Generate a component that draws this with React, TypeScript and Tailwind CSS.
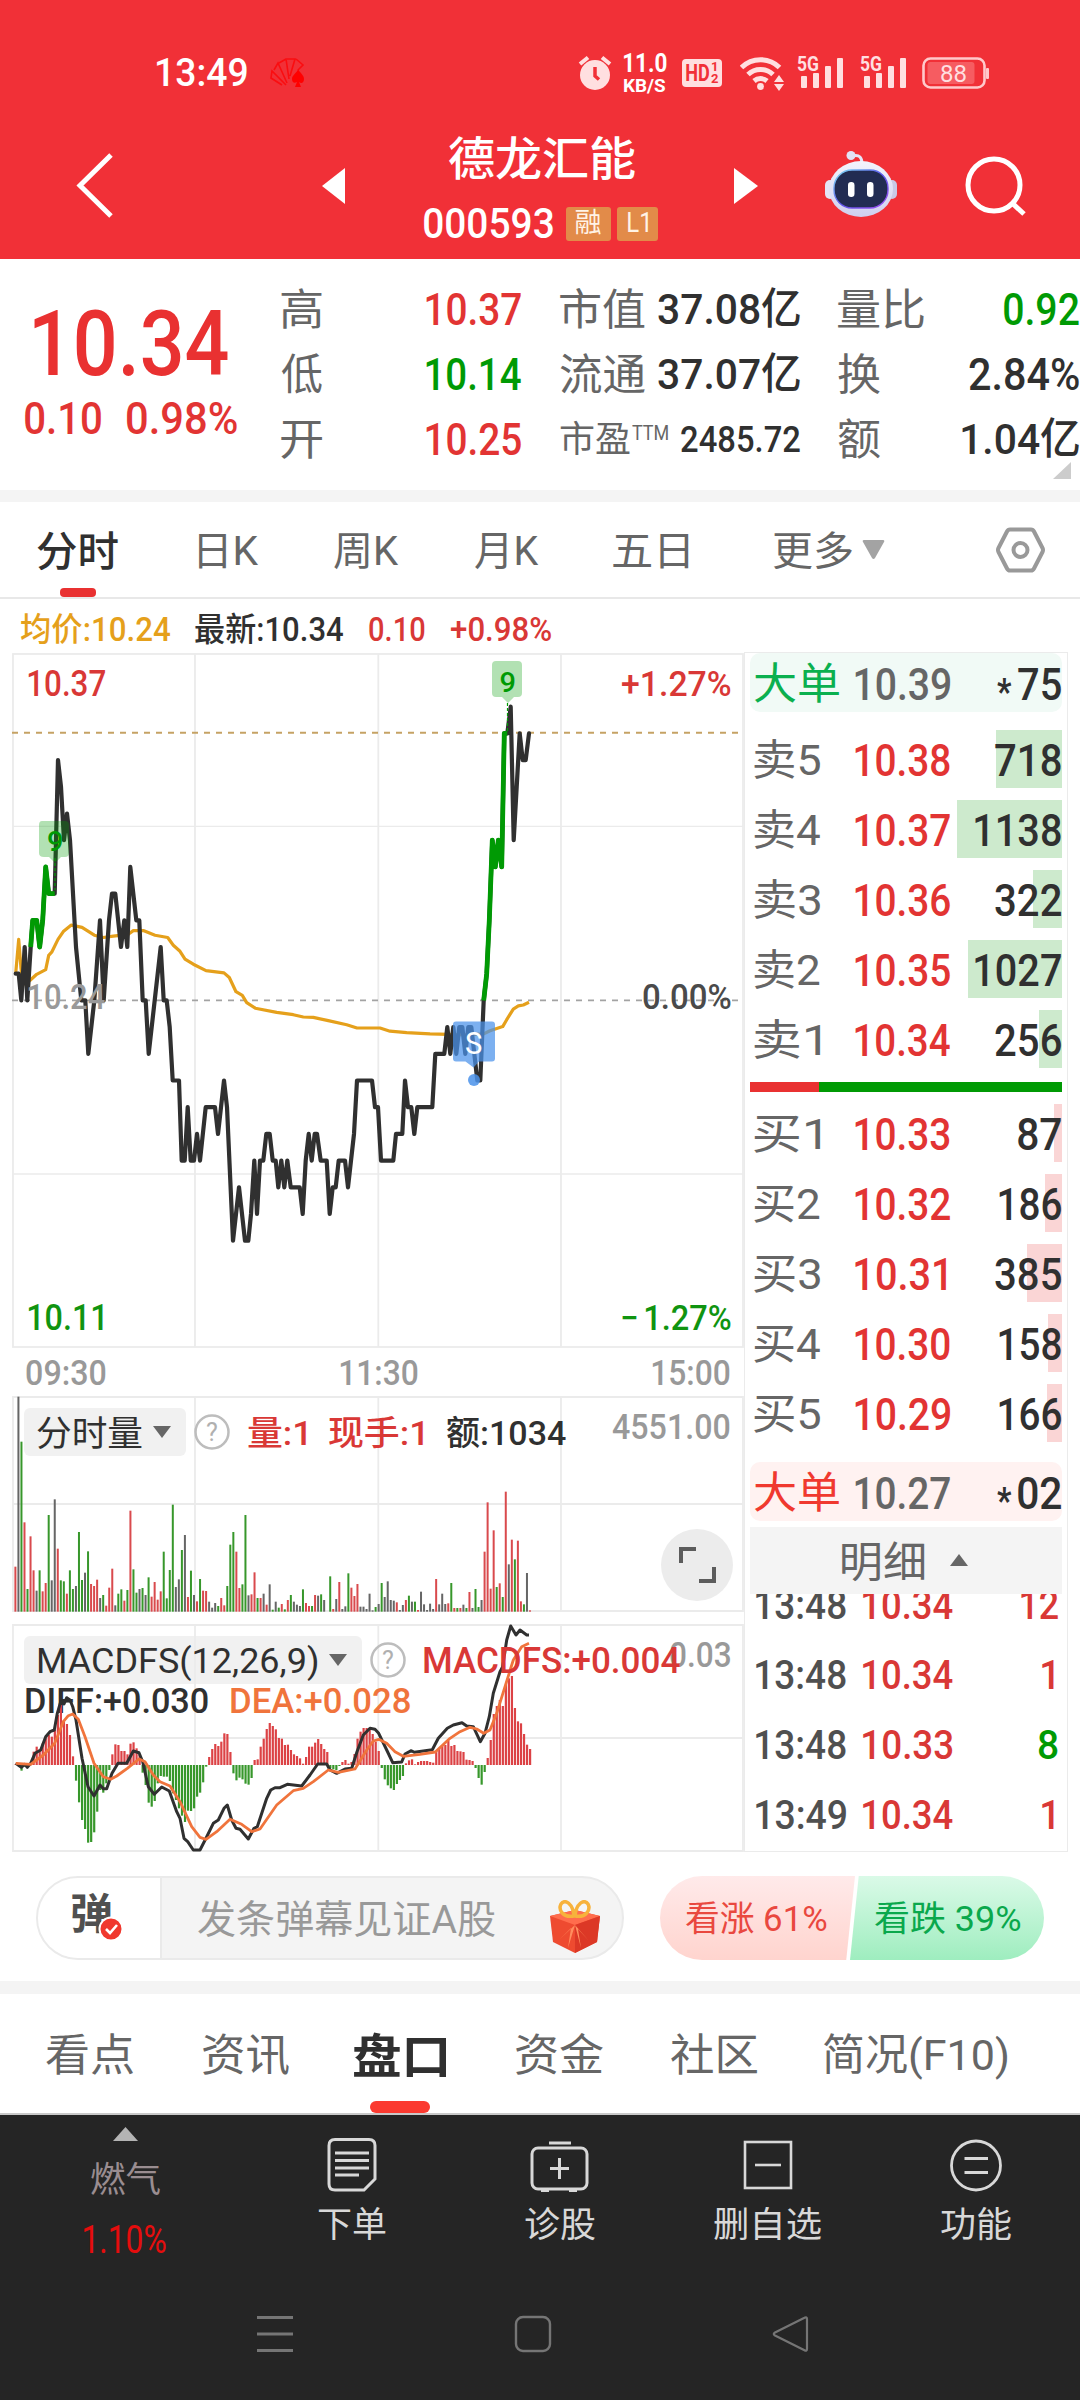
import React, { useMemo } from "react";

const FONT = 'Roboto, "Noto Sans CJK SC", sans-serif';

/* ---------- text that fills an exact width ---------- */

let canvas: HTMLCanvasElement | null = null;

function ink(text: string, size: number, weight: number) {
  canvas = canvas ?? document.createElement("canvas");
  const ctx = canvas.getContext("2d")!;
  ctx.font = `${weight} ${size}px ${FONT}`;
  const m = ctx.measureText(text);
  return { left: m.actualBoundingBoxLeft, width: m.actualBoundingBoxLeft + m.actualBoundingBoxRight };
}

type FitProps = { t: string; w: number; s: number; b?: number; className?: string };

function Fit({ t, w, s, b = 400, className = "" }: FitProps) {
  const m = useMemo(() => ink(t, s, b), [t, s, b]);
  const k = w / m.width;
  return (
    <span className={"block shrink-0 leading-none " + className} style={{ width: w, fontSize: s, fontWeight: b }}>
      <span
        className="inline-block origin-left whitespace-pre align-top"
        style={{ transform: `translateX(${m.left * k}px) scaleX(${k})` }}
      >
        {t}
      </span>
    </span>
  );
}

type ChartTextProps = { t: string; x: number; w: number; y: number; s: number; b?: number; fill: string; opacity?: number };

function ChartText({ t, x, w, y, s, b = 500, fill, opacity }: ChartTextProps) {
  const m = ink(t, s, b);
  const k = w / m.width;
  return (
    <text
      transform={`translate(${x + m.left * k} ${y}) scale(${k} 1)`}
      fontSize={s}
      fontWeight={b}
      fill={fill}
      opacity={opacity}
      fontFamily={FONT}
    >
      {t}
    </text>
  );
}

/* ---------- header ---------- */

function Signal() {
  return (
    <svg className="h-[34px] w-[48px]" viewBox="0 0 48 34">
      <text x="0" y="15" fontSize="20" fontWeight="700" fill="#ffdfe0" fontFamily={FONT} textLength="22" lengthAdjust="spacingAndGlyphs">5G</text>
      <g fill="#ffdfe0">
        <rect x="4" y="20" width="6" height="12" rx="1" />
        <rect x="16" y="17" width="6" height="15" rx="1" />
        <rect x="28" y="10" width="6" height="22" rx="1" />
        <rect x="40" y="2" width="6" height="30" rx="1" />
      </g>
    </svg>
  );
}

function StatusBar() {
  return (
    <div className="flex h-[146px] items-center pl-[157px]">
      <Fit t="13:49" w={90} s={38} b={500} className="text-white" />
      <svg className="ml-[23px] h-[30px] w-[36px]" viewBox="0 0 36 30">
        <g fill="none" stroke="#fa0d10" strokeWidth="1.600">
          <path d="M12 27L1 20l1-7 14 14M4 12l4-7 9 20M9 5l7-4 3 20M17 1h8l-5 17M26 1l7 6-5 5" />
        </g>
        <path d="M28 11c2 4 6 6 6 10 0 4-3 5-5 3l2 5h-6l2-5c-3 2-5 0-5-3 0-4 5-6 6-10z" fill="#ff0000" />
      </svg>
      <svg className="ml-[272px] h-[36px] w-[34px]" viewBox="0 0 34 36">
        <circle cx="17" cy="20" r="15" fill="#ffdfe0" />
        <path d="M2 9l8-6.500M32 9l-8-6.500" stroke="#ffdfe0" strokeWidth="4" />
        <path d="M17 12v9l4 3.500" stroke="#f13037" strokeWidth="3.500" fill="none" />
      </svg>
      <div className="ml-[12px] flex flex-col gap-0 text-white">
        <Fit t="11.0" w={43} s={25} b={700} />
        <Fit t="KB/S" w={42} s={19} b={700} />
      </div>
      <div className="ml-[15px] flex h-[28px] w-[40px] items-center gap-[2px] rounded-[4px] bg-[#ffdfe0] pl-[4px] text-[#f13037]">
        <Fit t="HD" w={23} s={23} b={700} />
        <span className="flex flex-col gap-0 text-[13px] leading-[12px] font-bold">
          <span>1</span>
          <span>2</span>
        </span>
      </div>
      <svg className="ml-[18px] h-[36px] w-[46px]" viewBox="0 0 46 36">
        <g fill="none" stroke="#ffdfe0" strokeWidth="5">
          <path d="M1.500 12.500a27 27 0 0 1 38 0" />
          <path d="M8 19.500a18 18 0 0 1 25 0" />
          <path d="M14 26a10 10 0 0 1 13 0" />
        </g>
        <circle cx="20.500" cy="31.500" r="3.400" fill="#ffdfe0" />
        <path d="M39 20l5 7H34zM39 36l5-7H34z" fill="#ffdfe0" />
      </svg>
      <div className="ml-[11px] flex gap-[15px]">
        <Signal />
        <Signal />
      </div>
      <svg className="ml-[14px] h-[32px] w-[68px]" viewBox="0 0 68 32">
        <rect x="1.500" y="1.500" width="61" height="29" rx="7" fill="none" stroke="#ffc9cb" strokeWidth="2.600" />
        <rect x="5.500" y="5" width="47" height="22" rx="3" fill="#f65c61" />
        <rect x="64" y="11" width="3" height="11" rx="1" fill="#ffc9cb" />
        <text x="18" y="24.500" fontSize="24" fill="#ffdfe0" fontFamily={FONT} textLength="27" lengthAdjust="spacingAndGlyphs">88</text>
      </svg>
    </div>
  );
}

function Robot() {
  return (
    <svg className="h-[68px] w-[74px]" viewBox="0 0 74 68">
      <defs>
        <linearGradient id="shell" x1="0" y1="0" x2="0" y2="1">
          <stop offset="0" stopColor="#f3f4fd" />
          <stop offset="1" stopColor="#cfcfee" />
        </linearGradient>
        <linearGradient id="rim" x1="0" y1="0" x2="1" y2="1">
          <stop offset="0" stopColor="#7fe0f4" />
          <stop offset=".5" stopColor="#5b55e8" />
          <stop offset="1" stopColor="#a04df0" />
        </linearGradient>
      </defs>
      <path d="M28 6c8-2 10 2 10 8" fill="none" stroke="#e6e6f8" strokeWidth="3" />
      <circle cx="27" cy="5.500" r="4.500" fill="#e2e2f6" />
      <rect x="1" y="30" width="10" height="19" rx="5" fill="#e4e4f6" />
      <rect x="63" y="30" width="10" height="19" rx="5" fill="#c9c9e6" />
      <ellipse cx="37" cy="39" rx="32" ry="28" fill="url(#shell)" />
      <rect x="10" y="20" width="54" height="38" rx="18" fill="#222c52" stroke="url(#rim)" strokeWidth="1.400" />
      <rect x="24" y="32" width="6.500" height="15" rx="3.200" fill="#fff" />
      <rect x="43" y="32" width="6.500" height="15" rx="3.200" fill="#fff" />
    </svg>
  );
}

function Header() {
  return (
    <header className="h-[259px] bg-[#f13037]">
      <StatusBar />
      <div className="-mt-[20px] flex h-[120px] items-center pl-[74px]">
        <svg className="h-[68px] w-[42px]" viewBox="0 0 42 68">
          <path d="M37 3L6 33.500 37 64" fill="none" stroke="#fff" strokeWidth="5" />
        </svg>
        <svg className="ml-[206px] h-[36px] w-[23px]" viewBox="0 0 23 36">
          <path d="M23 0v36L0 18z" fill="#fff" />
        </svg>
        <div className="mt-[8px] ml-[79px] flex w-[236px] flex-col items-center gap-[21px]">
          <Fit t="德龙汇能" w={186} s={46} b={500} className="text-white" />
          <div className="flex w-full items-center">
            <Fit t="000593" w={129} s={42} b={500} className="text-white" />
            <span className="ml-[13px] flex h-[34px] w-[45px] items-center justify-center rounded-[3px] bg-[#e28b49]">
              <Fit t="融" w={26} s={27} className="text-[#fff3e6]" />
            </span>
            <span className="ml-[6px] flex h-[34px] w-[41px] items-center justify-center rounded-[3px] bg-[#e28b49]">
              <Fit t="L1" w={20} s={27} className="text-[#fff3e6]" />
            </span>
          </div>
        </div>
        <svg className="ml-[74px] h-[36px] w-[24px]" viewBox="0 0 24 36">
          <path d="M0 0v36l24-18z" fill="#fff" />
        </svg>
        <div className="-mt-[4px] ml-[66px]">
          <Robot />
        </div>
        <svg className="ml-[67px] h-[62px] w-[62px]" viewBox="0 0 62 62">
          <circle cx="29" cy="30" r="26" fill="none" stroke="#fff" strokeWidth="5" />
          <path d="M47 48l12 11" stroke="#fff" strokeWidth="5" />
        </svg>
      </div>
    </header>
  );
}

/* ---------- quote summary ---------- */

const RED = "text-[#e23433]";
const GREEN = "text-[#009a04]";
const INK = "text-[#303030]";
const GRAY = "text-[#666666]";

function Summary() {
  const row = "flex h-[65px] items-center";
  return (
    <section className="flex h-[231px] overflow-hidden bg-white">
      <div className="flex w-[281px] flex-col pt-[40px]">
        <Fit t="10.34" w={194} s={91} b={500} className="ml-[34px] text-[#e93131]" />
        <div className="mt-[7px] flex pl-[25px]">
          <Fit t="0.10" w={76} s={44} b={500} className={RED} />
          <Fit t="0.98%" w={110} s={44} b={500} className={"ml-[26px] " + RED} />
        </div>
      </div>
      <div className="flex w-[240px] flex-col pt-[18px]">
        {[
          ["高", "10.37", RED],
          ["低", "10.14", GREEN],
          ["开", "10.25", RED],
        ].map(([l, v, c]) => (
          <div key={l} className={row + " justify-between"}>
            <Fit t={l} w={41} s={43} className={"mt-[2px] " + GRAY} />
            <Fit t={v} w={95} s={45} b={500} className={c} />
          </div>
        ))}
      </div>
      <div className="ml-[39px] flex w-[240px] flex-col pt-[18px]">
        <div className={row + " justify-between"}>
          <Fit t="市值" w={85} s={43} className={"mt-[2px] " + GRAY} />
          <Fit t="37.08亿" w={142} s={43} b={500} className={INK} />
        </div>
        <div className={row + " justify-between"}>
          <Fit t="流通" w={85} s={43} className={"mt-[2px] " + GRAY} />
          <Fit t="37.07亿" w={142} s={43} b={500} className={INK} />
        </div>
        <div className={row}>
          <Fit t="市盈" w={70} s={36} className={GRAY} />
          <Fit t="TTM" w={36} s={20} className={"-mt-[14px] ml-[2px] " + GRAY} />
          <Fit t="2485.72" w={119} s={37} b={500} className={"ml-[13px] " + INK} />
        </div>
      </div>
      <div className="ml-[38px] flex w-[241px] flex-col pt-[18px]">
        <div className={row + " justify-between"}>
          <Fit t="量比" w={86} s={43} className={"mt-[2px] " + GRAY} />
          <Fit t="0.92" w={75} s={44} b={500} className={GREEN} />
        </div>
        <div className={row + " justify-between"}>
          <Fit t="换" w={42} s={43} className={"mt-[2px] " + GRAY} />
          <Fit t="2.84%" w={110} s={44} b={500} className={INK} />
        </div>
        <div className={row + " justify-between"}>
          <Fit t="额" w={42} s={43} className={"mt-[2px] " + GRAY} />
          <Fit t="1.04亿" w={117} s={43} b={500} className={INK} />
        </div>
        <svg className="-mt-[10px] ml-[215px] h-[17px] w-[18px] shrink-0" viewBox="0 0 18 17">
          <path d="M18 0v17H0z" fill="#cccccc" />
        </svg>
      </div>
    </section>
  );
}

function PeriodTabs() {
  return (
    <nav className="flex h-[97px] items-center border-b-2 border-[#e8e8e8] bg-white pl-[37px]">
      <div className="flex h-full w-[81px] flex-col items-center justify-end">
        <Fit t="分时" w={81} s={41} b={500} className="text-[#303030]" />
        <div className="mt-[15px] h-[9px] w-[36px] rounded-[4px] bg-[#e93131]" />
      </div>
      <Fit t="日K" w={60} s={40} className={"mt-[5px] ml-[81px] " + GRAY} />
      <Fit t="周K" w={65} s={40} className={"mt-[5px] ml-[75px] " + GRAY} />
      <Fit t="月K" w={64} s={40} className={"mt-[5px] ml-[76px] " + GRAY} />
      <Fit t="五日" w={76} s={40} className={"mt-[5px] ml-[74px] " + GRAY} />
      <Fit t="更多" w={79} s={40} className={"mt-[5px] ml-[84px] " + GRAY} />
      <svg className="ml-[10px] h-[19px] w-[23px]" viewBox="0 0 23 19">
        <path d="M2 0h19q2 0 1 2L13 18q-1.500 2-3 0L1 2q-1-2 1-2z" fill="#a3a3a3" />
      </svg>
      <svg className="ml-[111px] h-[46px] w-[49px]" viewBox="0 0 49 46">
        <path d="M14 2.500h21q2 0 3 2l8.500 16.500q1 2 0 4L38 41.500q-1 2-3 2H14q-2 0-3-2L2.500 25q-1-2 0-4L11 4.500q1-2 3-2z" fill="none" stroke="#999" strokeWidth="4" />
        <circle cx="24.500" cy="23" r="7" fill="none" stroke="#999" strokeWidth="4" />
      </svg>
    </nav>
  );
}

/* ---------- charts: x in thirds of a pixel ---------- */

const PRICE: number[] = [
  47, 1, 56, 1, 64, 0, 74, 2, 82, 0, 92, 2, 98, 3, 110, 3, 119, 2, 128, 3, 137, 5, 146, 4, 164, 4, 174, 9, 183, 8, 192, 6, 201, 7, 210, 6,
  228, 2, 244, 0, 256, 0, 265, -2, 283, 0, 300, 3, 311, 0, 327, 3, 336, 4, 346, 4, 363, 2, 373, 3, 382, 2, 391, 5, 409, 3, 418, 3, 428, 0,
  437, 0, 446, -2, 482, 2, 491, 0, 500, 0, 509, -1, 518, -3, 537, -3, 545, -6, 554, -6, 563, -4, 572, -6, 582, -6, 591, -5, 600, -6, 617, -4,
  645, -4, 654, -5, 672, -3, 681, -4, 699, -9, 717, -7, 735, -9, 745, -9, 753, -8, 763, -6, 771, -8, 780, -6, 790, -6, 799, -5, 809, -5,
  818, -6, 827, -6, 835, -7, 844, -6, 853, -7, 862, -6, 872, -7, 899, -7, 908, -8, 917, -6, 926, -5, 935, -6, 944, -5, 951, -5, 962, -6,
  980, -6, 989, -8, 998, -7, 1007, -7, 1016, -6, 1035, -6, 1044, -7, 1062, -5, 1071, -3, 1116, -3, 1125, -4, 1134, -4, 1143, -6, 1180, -6,
  1188, -5, 1207, -5, 1215, -3, 1224, -4, 1234, -4, 1243, -5, 1252, -4, 1297, -4, 1306, -2, 1333, -2, 1342, -1, 1351, -2, 1360, -1, 1369, -2,
  1378, -1, 1387, -1, 1396, -2, 1405, -1, 1414, -1, 1423, -2, 1432, -3, 1441, -3, 1451, 0, 1460, 1, 1468, 3, 1477, 6, 1486, 5, 1495, 6,
  1505, 5, 1513, 10, 1522, 10, 1532, 11, 1541, 6, 1550, 8, 1559, 10, 1568, 9, 1577, 9, 1587, 10,
];

const AVG: number[] = [
  47, 726, 56, 652, 63, 715, 70, 750, 92, 740, 110, 728, 137, 718, 146, 687, 155, 680, 174, 652, 190, 635, 214, 621, 246, 626, 283, 643, 310, 648,
  340, 645, 385, 641, 400, 633, 430, 633, 465, 643, 503, 648, 520, 665, 540, 678, 555, 695, 580, 706, 618, 720, 672, 725, 688, 735, 708, 766,
  727, 774, 740, 790, 766, 802, 830, 811, 880, 816, 910, 821, 940, 822, 985, 829, 1040, 838, 1071, 845, 1140, 845, 1170, 852, 1220, 855,
  1290, 858, 1400, 860, 1451, 858, 1470, 851, 1508, 842, 1520, 827, 1540, 804, 1555, 797, 1570, 795, 1587, 789,
];

const DIFF: number[] = [
  47, 1240, 64, 1252, 74, 1243, 82, 1252, 92, 1240, 105, 1210, 122, 1200, 137, 1160, 150, 1145, 163, 1140, 172, 1090, 182, 1055, 192, 1062,
  200, 1043, 210, 1050, 218, 1070, 228, 1110, 246, 1225, 264, 1310, 282, 1338, 300, 1305, 310, 1316, 320, 1316, 336, 1270, 354, 1240,
  380, 1240, 400, 1203, 417, 1208, 428, 1235, 445, 1310, 463, 1333, 485, 1311, 508, 1323, 530, 1385, 540, 1405, 552, 1465, 563, 1475,
  580, 1500, 600, 1500, 618, 1465, 640, 1420, 655, 1410, 672, 1375, 682, 1365, 695, 1410, 708, 1435, 720, 1438, 745, 1467, 762, 1435,
  772, 1430, 800, 1345, 812, 1320, 825, 1313, 840, 1313, 862, 1303, 905, 1308, 930, 1275, 953, 1242, 980, 1242, 990, 1260, 1010, 1270,
  1035, 1257, 1055, 1255, 1071, 1205, 1090, 1155, 1110, 1135, 1125, 1138, 1136, 1150, 1160, 1200, 1178, 1238, 1205, 1236, 1215, 1212,
  1234, 1202, 1243, 1207, 1297, 1199, 1315, 1165, 1342, 1135, 1360, 1125, 1386, 1118, 1400, 1128, 1420, 1130, 1441, 1175, 1455, 1150,
  1468, 1100, 1480, 1030, 1500, 965, 1508, 950, 1520, 870, 1532, 828, 1548, 855, 1560, 840, 1580, 855, 1587, 855,
];

const DEA: number[] = [
  47, 1240, 92, 1243, 130, 1215, 164, 1180, 190, 1115, 205, 1097, 218, 1092, 235, 1108, 255, 1160, 282, 1240, 310, 1280, 332, 1288, 350, 1278,
  382, 1255, 417, 1227, 435, 1235, 460, 1275, 480, 1295, 510, 1308, 540, 1355, 575, 1430, 600, 1462, 618, 1468, 650, 1445, 690, 1408,
  725, 1423, 755, 1445, 780, 1437, 830, 1365, 880, 1322, 910, 1315, 940, 1295, 985, 1260, 1015, 1267, 1065, 1257, 1100, 1200, 1120, 1173,
  1136, 1168, 1160, 1180, 1185, 1205, 1210, 1219, 1260, 1213, 1306, 1206, 1350, 1165, 1380, 1145, 1410, 1132, 1430, 1137, 1451, 1150,
  1470, 1140, 1490, 1090, 1515, 1010, 1540, 930, 1565, 890, 1587, 880,
];

/* bar top and colour (r up, g down, k flat), one per minute */
const VOLUME =
  "650r 140k 275g 517r 717g 559r 661r 722k 661g 724r 699r 495g 691k 448k 596r 691g 694g 731r 661g 717g 708k 546g 690g 668k 604g 702r 708r 689r 744k 735g 767r 713r 656r 766k 731g 718g 752r 720g 482r 658g 728g 717k 714g 735k 682g 740r 696r 749r 724r 605g 745g 660g 464g 711k 688k 600g 555k 741r 662g 735k 754r 687g 722r 723r 755k 773k 759k 768g 744r 766r 708g 584g 546g 605r 714r 703g 495g 736k 733r 667r 744g 744r 731k 764r 703k 779g 755k 773g 762r 778g 750r 735g 755k 764k 768k 718g 759r 768r 768g 735r 737k 733g 750k 785k 679g 777r 747k 696r 777k 769k 670g 713r 738r 702r 770k 770k 777k 731k 781k 771g 762k 699g 741k 694k 750k 752k 757r 780k 765k 750r 737g 755k 755g 780r 725k 763k 780k 761k 777k 687r 763k 731k 762k 760r 699g 774r 774g 774r 764k 774g 726r 774k 717g 771g 750k 605r 457r 716r 541r 711g 700r 741g 425r 643k 569r 628g 572r 754r 763g 669k 781r";

const MACD: number[] = [
  1243, 1243, 1262, 1250, 1250, 1240, 1205, 1190, 1198, 1180, 1165, 1155, 1160, 1140, 1095, 1065, 1110, 1122, 1155, 1219, 1292, 1357, 1410, 1437,
  1478, 1476, 1447, 1385, 1320, 1328, 1300, 1260, 1213, 1183, 1185, 1203, 1203, 1213, 1181, 1177, 1195, 1215, 1268, 1305, 1358, 1370, 1353, 1300,
  1278, 1280, 1280, 1293, 1330, 1350, 1375, 1397, 1416, 1382, 1383, 1375, 1340, 1328, 1297, 1250, 1221, 1197, 1182, 1188, 1175, 1150, 1152, 1206,
  1270, 1291, 1283, 1288, 1301, 1304, 1284, 1230, 1228, 1190, 1166, 1137, 1119, 1128, 1138, 1164, 1166, 1185, 1184, 1200, 1213, 1218, 1225, 1241,
  1221, 1190, 1190, 1178, 1167, 1182, 1197, 1206, 1255, 1258, 1260, 1248, 1236, 1230, 1241, 1236, 1212, 1166, 1145, 1134, 1134, 1134, 1152, 1175,
  1203, 1254, 1288, 1306, 1315, 1320, 1302, 1290, 1278, 1240, 1231, 1228, 1243, 1236, 1233, 1233, 1233, 1236, 1238, 1205, 1195, 1188, 1185, 1172,
  1188, 1185, 1203, 1204, 1206, 1229, 1230, 1233, 1254, 1284, 1304, 1266, 1224, 1170, 1092, 1068, 1050, 1068, 1005, 985, 978, 1074, 1114, 1120,
  1152, 1184, 1197,
];

function points(d: number[], fx: (x: number) => number, fy: (y: number) => number) {
  const out: string[] = [];
  for (let i = 0; i < d.length; i += 2) out.push(`${fx(d[i]).toFixed(1)},${fy(d[i + 1]).toFixed(1)}`);
  return out.join(" ");
}

const third = (v: number) => v / 3;
const CHART_TOP = 646;
const priceY = (n: number) => 1000.400 - CHART_TOP - n * 26.700;
const avgY = (v: number) => 640 - CHART_TOP + v / 2.178;
const lowTop = 1350 - CHART_TOP;
const lowY = (v: number) => lowTop + v / 3;

const barColor: Record<string, string> = { r: "#d94a4d", g: "#37972b", k: "#666666" };

function HelpMark({ x, y }: { x: number; y: number }) {
  return (
    <g>
      <circle cx={x} cy={y} r="16.500" fill="none" stroke="#bdbdbd" strokeWidth="2.500" />
      <text x={x} y={y + 9} fontSize="25" textAnchor="middle" fill="#b0b0b0" fontFamily={FONT}>?</text>
    </g>
  );
}

function Charts() {
  const Y = (v: number) => v - CHART_TOP;
  const grid = "#ebebeb";
  const cols = [195, 378.300, 561];
  return (
    <svg className="h-[1214px] w-[744px] shrink-0" viewBox="0 0 744 1214">
      {/* grids */}
      <g stroke={grid} strokeWidth="1.800" fill="none">
        <rect x="13" y={Y(654)} width="730" height="693" />
        <path d={`M13 ${Y(826.400)}H743M13 ${Y(1174)}H743`} strokeWidth="1.300" />
        <path d={`M13 ${Y(1611)}V${Y(1397)}H743V${Y(1611)}zM13 ${Y(1504)}H743`} />
        <path d={`M13 ${Y(1625)}H743V${Y(1851)}H13zM13 ${Y(1738)}H743`} />
        {cols.map((x) => (
          <path key={x} d={`M${x} ${Y(654)}V${Y(1347)}M${x} ${Y(1397)}V${Y(1611)}`} />
        ))}
      </g>

      {/* price */}
      <path d={`M12 ${Y(732.700)}H739`} stroke="#c5a264" strokeWidth="2" strokeDasharray="6 6" />
      <path d={`M12 ${Y(1000.400)}H739`} stroke="#a3a3a3" strokeWidth="1.800" strokeDasharray="6 6" />
      <ChartText t="0.00%" x={643} w={88} y={Y(1008.500)} s={35} fill="#4a4a4a" />
      <polyline points={points(AVG, third, avgY)} fill="none" stroke="#e5a01b" strokeWidth="3.200" strokeLinejoin="round" />
      <polyline points={points(PRICE, third, priceY)} fill="none" stroke="#303030" strokeWidth="4.200" strokeLinejoin="round" strokeLinecap="round" />
      <g fill="none" stroke="#009a04" strokeWidth="4.800" strokeLinejoin="round">
        <polyline points={points(PRICE.slice(10, 26), third, priceY)} />
        <polyline points={points(PRICE.slice(PRICE.indexOf(1451), PRICE.indexOf(1532)), third, priceY)} />
      </g>
      <ChartText t="10.24" x={28} w={77} y={Y(1009)} s={36} fill="#999999" />
      <path d={`M55 ${Y(858)}V${Y(890)}M507.500 ${Y(703)}V${Y(732)}`} stroke="#009a04" strokeWidth="1.200" strokeDasharray="3 2" />
      <g fill="#009a04" fillOpacity=".3">
        <path d={`M42 ${Y(821)}h23q4 0 4 4v28q0 4-4 4h-4l-6 6-6-6h-5q-5 0-5-4v-28q0-4 3-4z`} />
        <path d={`M496 ${Y(661)}h22q4 0 4 4v28q0 4-4 4h-4l-6 6-6-6h-6q-4 0-4-4v-28q0-4 4-4z`} />
      </g>
      <ChartText t="9" x={48} w={14} y={Y(851)} s={27} fill="#009a04" />
      <ChartText t="9" x={500.500} w={14.500} y={Y(692)} s={28} fill="#009a04" />
      <path d={`M456 ${Y(1021.500)}h36q3 0 3 3v34q0 3-3 3h-13l-5.500 6-8-6h-9.500q-3 0-3-3v-34q0-3 3-3z`} fill="#4a92ea" fillOpacity=".72" />
      <circle cx="474" cy={Y(1080)} r="6" fill="#4a92ea" fillOpacity=".85" />
      <ChartText t="S" x={466} w={16} y={Y(1054)} s={31} b={400} fill="#fff" />
      <ChartText t="10.37" x={28} w={77} y={Y(696)} s={36} fill="#d93836" />
      <ChartText t="+1.27%" x={622} w={109} y={Y(696)} s={35} fill="#d93836" />
      <ChartText t="10.11" x={28} w={75} y={Y(1330)} s={36} fill="#109410" />
      <ChartText t="−" x={622} w={15} y={Y(1330)} s={35} fill="#109410" />
      <ChartText t="1.27%" x={645} w={86} y={Y(1330)} s={35} fill="#109410" />

      {/* time axis */}
      <ChartText t="09:30" x={26} w={80} y={Y(1385)} s={35} fill="#999" />
      <ChartText t="11:30" x={340} w={78} y={Y(1385)} s={35} fill="#999" />
      <ChartText t="15:00" x={652} w={78} y={Y(1385)} s={35} fill="#999" />

      {/* volume */}
      {VOLUME.split(" ").map((v, i) => {
        const top = lowY(parseInt(v, 10));
        return <rect key={i} x={14.400 + i * 3.027} y={top} width="2" height={lowY(785) - top} fill={barColor[v.slice(-1)]} />;
      })}
      <rect x="24" y={Y(1408)} width="162" height="48" rx="6" fill="#f1f1f1" />
      <ChartText t="分时量" x={37} w={105} y={Y(1446)} s={35} b={400} fill="#303030" />
      <path d={`M153 ${Y(1426)}h18l-9 12z`} fill="#666" />
      <HelpMark x={212} y={Y(1432)} />
      <ChartText t="量:1" x={248} w={58} y={Y(1445)} s={34} fill="#d93836" />
      <ChartText t="现手:1" x={329} w={94} y={Y(1445)} s={34} fill="#d93836" />
      <ChartText t="额:1034" x={447} w={119} y={Y(1445)} s={34} fill="#303030" />
      <ChartText t="4551.00" x={612} w={118} y={Y(1439)} s={35} fill="#999" />
      <circle cx="697" cy={Y(1565)} r="36" fill="#ececec" />
      <path d={`M681 ${Y(1563)}v-14h15M714 ${Y(1567)}v14h-15`} fill="none" stroke="#5c5c5c" strokeWidth="4" />

      {/* MACD */}
      <rect x="24" y={Y(1636)} width="338" height="48" rx="6" fill="#f1f1f1" />
      <g stroke={grid} strokeWidth="1.800">
        {cols.map((x) => (
          <path key={x} d={`M${x} ${Y(1625)}V${Y(1851)}`} />
        ))}
      </g>
      <ChartText t="MACDFS(12,26,9)" x={38} w={279} y={Y(1673)} s={36} b={400} fill="#303030" />
      <path d={`M329 ${Y(1654)}h18l-9 12z`} fill="#666" />
      <HelpMark x={388} y={Y(1660)} />
      <ChartText t="0.03" x={670} w={60} y={Y(1667)} s={35} fill="#999" />
      <ChartText t="DIFF:+0.030" x={26} w={182} y={Y(1713)} s={36} fill="#303030" />
      <ChartText t="DEA:+0.028" x={231} w={179} y={Y(1713)} s={36} fill="#f0743c" />
      {MACD.map((v, i) => {
        const a = lowY(v);
        const z = lowY(1245);
        return <rect key={i} x={14.400 + i * 3.027} y={Math.min(a, z)} width="2.200" height={Math.abs(a - z)} fill={v < 1245 ? "#dc4245" : "#37972b"} />;
      })}
      <polyline points={points(DIFF, third, lowY)} fill="none" stroke="#303030" strokeWidth="3" strokeLinejoin="round" />
      <polyline points={points(DEA, third, lowY)} fill="none" stroke="#f0743c" strokeWidth="2.800" strokeLinejoin="round" />
      <ChartText t="MACDFS:+0.004" x={424} w={256} y={Y(1673)} s={36} fill="#d93836" />
    </svg>
  );
}

/* ---------- order book ---------- */

type Level = { l: string; p: string; v: string; bar: number; pw?: number; vw: number };

const ASKS: Level[] = [
  { l: "卖5", p: "10.38", v: "718", bar: 66, vw: 66 },
  { l: "卖4", p: "10.37", v: "1138", bar: 105, vw: 86 },
  { l: "卖3", p: "10.36", v: "322", bar: 29, vw: 66 },
  { l: "卖2", p: "10.35", v: "1027", bar: 94, vw: 86 },
  { l: "卖1", p: "10.34", v: "256", bar: 23, vw: 66 },
];
const BIDS: Level[] = [
  { l: "买1", p: "10.33", v: "87", bar: 8, vw: 43 },
  { l: "买2", p: "10.32", v: "186", bar: 17, vw: 62 },
  { l: "买3", p: "10.31", v: "385", bar: 35, pw: 91, vw: 66 },
  { l: "买4", p: "10.30", v: "158", bar: 14, vw: 62 },
  { l: "买5", p: "10.29", v: "166", bar: 15, vw: 62 },
];

function BookRow({ r, tint }: { r: Level; tint: string }) {
  return (
    <div className="relative flex h-[70px] items-center pt-[3px] pl-[4px]">
      <div className={"absolute top-[6px] right-0 h-[58px] " + tint} style={{ width: r.bar }} />
      <Fit t={r.l} w={66} s={42} className={"relative " + GRAY} />
      <Fit t={r.p} w={r.pw ?? 95} s={45} b={500} className="relative ml-[35px] text-[#e23433]" />
      <div className="relative mr-[1px] ml-auto">
        <Fit t={r.v} w={r.vw} s={45} b={500} className={INK} />
      </div>
    </div>
  );
}

function BigOrder({ p, v, tone }: { p: string; v: string; tone: string }) {
  return (
    <div className={"flex h-[59px] items-center rounded-[10px] pt-[4px] pl-[4px] " + tone}>
      <Fit t="大单" w={85} s={43} />
      <Fit t={p} w={95} s={45} b={500} className="ml-[16px] text-[#666666]" />
      <div className="mr-[1px] ml-auto flex items-center gap-[6px]">
        <Fit t="*" w={15} s={36} b={700} className={"mt-[14px] " + INK} />
        <Fit t={v} w={43} s={45} b={500} className={INK} />
      </div>
    </div>
  );
}

const TRADES = [
  { t: "13:48", p: "10.34", v: "12", c: "text-[#d93836]", w: 37 },
  { t: "13:48", p: "10.34", v: "1", c: "text-[#d93836]", w: 12 },
  { t: "13:48", p: "10.33", v: "8", c: "text-[#009a04]", w: 19 },
  { t: "13:49", p: "10.34", v: "1", c: "text-[#d93836]", w: 12 },
];

function OrderBook() {
  return (
    <aside className="mt-[6px] flex h-[1200px] w-[324px] flex-col border border-[#ebebeb] pr-[5px] pl-[5px]">
      <BigOrder p="10.39" v="75" tone="bg-[#f1faf6] text-[#0bb04f]" />
      <div className="mt-[12px]">
        {ASKS.map((r) => (
          <BookRow key={r.l} r={r} tint="bg-[#cdeacd]" />
        ))}
      </div>
      <div className="mt-[8px] flex h-[10px] shrink-0">
        <div className="w-[69px] bg-[#e93131]" />
        <div className="flex-1 bg-[#009a04]" />
      </div>
      <div className="mt-[6px]">
        {BIDS.map((r) => (
          <BookRow key={r.l} r={r} tint="bg-[#fad5d5]" />
        ))}
      </div>
      <div className="mt-[14px] shrink-0">
        <BigOrder p="10.27" v="02" tone="bg-[#fff2f1] text-[#f0392f]" />
      </div>
      <div className="mt-[6px] flex h-[67px] shrink-0 items-center bg-[#f4f4f4] pt-[4px] pl-[92px]">
        <Fit t="明细" w={83} s={42} className={GRAY} />
        <svg className="-mt-[5px] ml-[25px] h-[12px] w-[18px]" viewBox="0 0 18 12">
          <path d="M9 0l9 12H0z" fill="#666" />
        </svg>
      </div>
      <div className="flex h-[250px] flex-col overflow-hidden">
        <div className="-mt-[24px]">
          {TRADES.map((r, i) => (
            <div key={i} className="flex h-[70px] items-center pl-[6px]">
              <Fit t={r.t} w={90} s={41} b={500} className="text-[#505050]" />
              <Fit t={r.p} w={90} s={41} b={500} className="ml-[17px] text-[#d93836]" />
              <div className={r.v === "1" ? "mr-[8px] ml-auto" : "mr-[4px] ml-auto"}>
                <Fit t={r.v} w={r.w} s={41} b={500} className={r.c} />
              </div>
            </div>
          ))}
        </div>
      </div>
    </aside>
  );
}

/* ---------- lower bars ---------- */

function Gift() {
  return (
    <svg className="h-[53px] w-[52px]" viewBox="0 0 52 53">
      <path d="M1 16l25-6 25 6-3 26-22 11L4 42z" fill="#ee4b30" />
      <path d="M1 16l25-6 25 6-25 9z" fill="#ff6d4d" />
      <path d="M26 25l25-9-3 26-22 11z" fill="#dc3826" />
      <path d="M26 25L10 40l12-12-3 20zM26 25l14 16-11-12 3 19z" fill="#ff8d5e" />
      <path d="M25 16C14 18 9 10 12 4c4-6 12 0 13 12zM26 16c11 2 16-6 13-12-4-6-12 0-13 12z" fill="none" stroke="#f7b23c" strokeWidth="3.500" />
    </svg>
  );
}

function Barrage() {
  return (
    <section className="flex h-[121px] items-start bg-white pt-[16px] pl-[36px]">
      <div className="flex h-[84px] w-[588px] overflow-hidden rounded-full border-2 border-[#eaeaea] bg-[#f4f4f4]">
        <div className="relative w-[124px] border-r-2 border-[#eaeaea] bg-white pt-[16px] pl-[34px]">
          <Fit t="弹" w={40} s={42} b={700} className="text-[#505050]" />
          <svg className="absolute top-[38px] left-[60px] h-[26px] w-[26px]" viewBox="0 0 26 26">
            <circle cx="13" cy="13" r="11.500" fill="#f0382e" stroke="#fff" strokeWidth="2" />
            <path d="M8 13l4 4 7-8" fill="none" stroke="#fff" strokeWidth="2.600" />
          </svg>
        </div>
        <div className="flex flex-1 items-center pl-[36px]">
          <Fit t="发条弹幕见证A股" w={297} s={39} className="mt-[4px] text-[#999999]" />
          <div className="mt-[17px] ml-[54px]">
            <Gift />
          </div>
        </div>
      </div>
      <div className="ml-[36px] flex h-[84px] w-[384px] overflow-hidden rounded-full">
        <div className="z-10 flex w-[195px] items-center bg-gradient-to-b from-[#ffeaea] to-[#ffd4ce] pt-[3px] pl-[26px] [clip-path:polygon(0_0,100%_0,95.5%_100%,0_100%)]">
          <Fit t="看涨 61%" w={141} s={35} className="text-[#e9483f]" />
        </div>
        <div className="-ml-[5px] flex flex-1 items-center bg-gradient-to-b from-[#dafae8] to-[#9eedbf] pt-[3px] pl-[25px] [clip-path:polygon(4.5%_0,100%_0,100%_100%,0_100%)]">
          <Fit t="看跌 39%" w={146} s={35} className="text-[#0aa84c]" />
        </div>
      </div>
    </section>
  );
}

function InfoTabs() {
  return (
    <nav className="flex h-[121px] items-center border-b-2 border-[#c9c9c9] bg-white pl-[46px]">
      <Fit t="看点" w={87} s={44} className={"mt-[4px] " + GRAY} />
      <Fit t="资讯" w={86} s={44} className={"mt-[4px] ml-[70px] " + GRAY} />
      <div className="ml-[64px] flex h-full flex-col items-center justify-end">
        <Fit t="盘口" w={94} s={47} b={700} className="text-[#303030]" />
        <div className="mt-[21px] h-[12px] w-[60px] rounded-[6px] bg-[#fb3a30]" />
      </div>
      <Fit t="资金" w={87} s={44} className={"mt-[4px] ml-[69px] " + GRAY} />
      <Fit t="社区" w={86} s={44} className={"mt-[4px] ml-[68px] " + GRAY} />
      <Fit t="简况(F10)" w={183} s={43} className={"mt-[4px] ml-[67px] " + GRAY} />
    </nav>
  );
}

function Footer() {
  const label = "text-[#d8d8d8]";
  return (
    <footer className="h-[285px] bg-[#252525]">
      <div className="flex h-[160px] items-start">
        <div className="ml-[84px] flex w-[82px] flex-col items-center pt-[12px]">
          <svg className="h-[14px] w-[25px]" viewBox="0 0 25 14">
            <path d="M12.500 0L25 14H0z" fill="#b4b4b4" />
          </svg>
          <Fit t="燃气" w={69} s={35} className="mt-[22px] text-[#9a8d91]" />
          <Fit t="1.10%" w={82} s={38} className="mt-[23px] text-[#e50d0d]" />
        </div>
        <div className="ml-[152px] flex w-[68px] flex-col items-center pt-[22px]">
          <svg className="h-[56px] w-[50px]" viewBox="0 0 50 56" fill="none" stroke="#d8d8d8" strokeWidth="3">
            <path d="M8 2.500h34q6 0 6 6V42L37 53H8q-6 0-6-6V8.500q0-6 6-6z" />
            <path d="M8 16h34M8 23.500h34M8 31h34M8 38h24" />
          </svg>
          <Fit t="下单" w={68} s={35} className={"mt-[15px] " + label} />
        </div>
        <div className="ml-[139px] flex w-[70px] flex-col items-center pt-[22px]">
          <svg className="h-[56px] w-[60px]" viewBox="0 0 60 56" fill="none" stroke="#d8d8d8" strokeWidth="3">
            <path d="M19 6h22" />
            <rect x="2" y="11" width="55" height="41" rx="6" />
            <path d="M29.500 21v21M20 31.500h19M11 53.500h8M39 53.500h8" />
          </svg>
          <Fit t="诊股" w={70} s={35} className={"mt-[15px] " + label} />
        </div>
        <div className="ml-[119px] flex w-[107px] flex-col items-center pt-[22px]">
          <svg className="h-[56px] w-[50px]" viewBox="0 0 50 56" fill="none" stroke="#d8d8d8" strokeWidth="2.600">
            <rect x="2" y="5" width="46" height="46" />
            <path d="M12 28h26" />
          </svg>
          <Fit t="删自选" w={107} s={35} className={"mt-[15px] " + label} />
        </div>
        <div className="ml-[120px] flex w-[70px] flex-col items-center pt-[22px]">
          <svg className="h-[56px] w-[54px]" viewBox="0 0 54 56" fill="none" stroke="#d8d8d8" strokeWidth="2.800">
            <circle cx="27" cy="28.500" r="24.500" />
            <path d="M15.500 21.500H39M15.500 35.500H39" />
          </svg>
          <Fit t="功能" w={70} s={35} className={"mt-[15px] " + label} />
        </div>
      </div>
      <div className="flex h-[118px] items-center pl-[256px]">
        <svg className="h-[40px] w-[38px]" viewBox="0 0 38 40">
          <path d="M1 3.500h36M1 20h36M1 36.500h36" stroke="#757575" strokeWidth="2.800" />
        </svg>
        <svg className="ml-[220px] h-[38px] w-[38px]" viewBox="0 0 38 38">
          <rect x="2" y="2" width="34" height="34" rx="7" fill="none" stroke="#757575" strokeWidth="2.400" />
        </svg>
        <svg className="ml-[219px] h-[38px] w-[38px]" viewBox="0 0 38 38">
          <path d="M33.500 2.800q2.500-1.400 2.500 1.500v29.400q0 2.900-2.500 1.500L4 20.500q-2.500-1.500 0-3z" fill="none" stroke="#757575" strokeWidth="2.200" />
        </svg>
      </div>
    </footer>
  );
}

export default function App() {
  return (
    <div className="h-[2400px] w-[1080px] overflow-hidden bg-white" style={{ fontFamily: FONT }}>
      <Header />
      <Summary />
      <div className="h-[12px] bg-[#f4f4f4]" />
      <PeriodTabs />
      <div className="flex h-[47px] items-start pt-[14px] pl-[21px]">
        <Fit t="均价:10.24" w={149} s={33} b={500} className="text-[#e5a01b]" />
        <Fit t="最新:10.34" w={148} s={33} b={500} className="ml-[25px] text-[#303030]" />
        <Fit t="0.10" w={56} s={33} b={500} className="ml-[26px] text-[#d93836]" />
        <Fit t="+0.98%" w={100} s={33} b={500} className="ml-[26px] text-[#d93836]" />
      </div>
      <main className="flex h-[1214px]">
        <Charts />
        <OrderBook />
      </main>
      <Barrage />
      <div className="h-[13px] bg-[#f4f4f4]" />
      <InfoTabs />
      <Footer />
    </div>
  );
}
